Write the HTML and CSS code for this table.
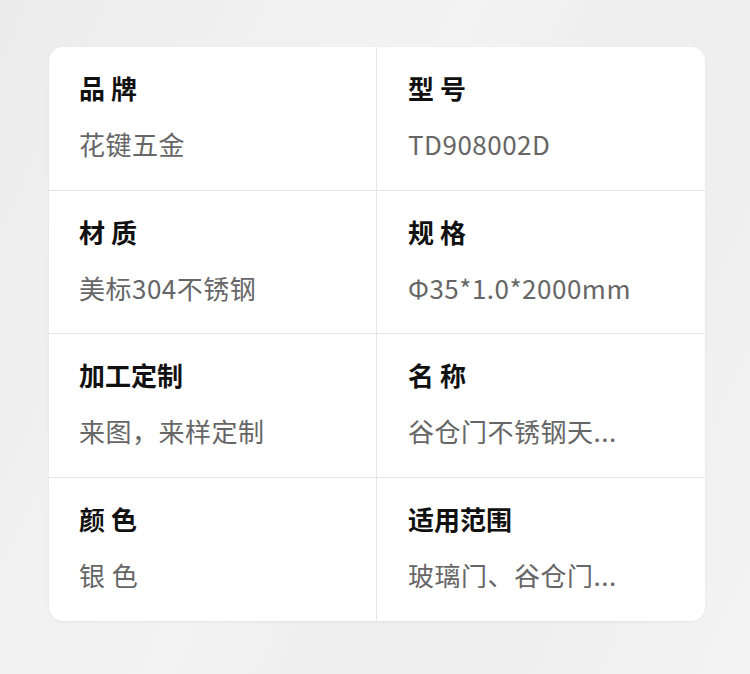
FILE: index.html
```html
<!DOCTYPE html>
<html lang="zh">
<head>
<meta charset="utf-8">
<link rel="stylesheet" href="styles.css">
</head>
<body>
<div class="page">
  <div class="card">
    <div class="cell"><div class="label">品 牌</div><div class="value">花键五金</div></div>
    <div class="cell"><div class="label">型 号</div><div class="value">TD908002D</div></div>
    <div class="cell"><div class="label">材 质</div><div class="value">美标304不锈钢</div></div>
    <div class="cell"><div class="label">规 格</div><div class="value">Φ35*1.0*2000mm</div></div>
    <div class="cell"><div class="label">加工定制</div><div class="value">来图，来样定制</div></div>
    <div class="cell"><div class="label">名 称</div><div class="value">谷仓门不锈钢天...</div></div>
    <div class="cell"><div class="label">颜 色</div><div class="value">银 色</div></div>
    <div class="cell"><div class="label">适用范围</div><div class="value">玻璃门、谷仓门...</div></div>
  </div>
</div>
</body>
</html>
```
FILE: styles.css
```css
html, body {
  margin: 0;
  padding: 0;
}
body {
  width: 750px;
  height: 674px;
  overflow: hidden;
  background: linear-gradient(115deg, #ececec 0%, #f1f1f1 30%, #f3f3f3 45%, #eeeeee 60%, #f0f0f0 85%, #f4f4f4 100%);
  font-family: "Noto Sans CJK SC", "Noto Sans", sans-serif;
}
.page {
  padding: 47px 45px 0 49px;
}
.card {
  width: 656px;
  height: 574px;
  background: #fff;
  border-radius: 14px;
  box-shadow: 0 1px 3px rgba(0, 0, 0, 0.06);
  display: grid;
  grid-template-columns: 327px 329px;
  grid-template-rows: repeat(4, 1fr);
  overflow: hidden;
}
.cell {
  padding: 24px 0 0 30px;
  border-bottom: 1px solid #e6e6e6;
  display: flex;
  flex-direction: column;
  gap: 22px;
}
.cell:nth-child(even) {
  border-left: 1px solid #e6e6e6;
  padding-left: 31px;
}
.cell:nth-child(n+7) {
  border-bottom: none;
}
.label {
  font-size: 26px;
  font-weight: 700;
  color: #111;
  line-height: 34px;
}
.value {
  font-size: 26px;
  color: #666;
  line-height: 34px;
  letter-spacing: 0.5px;
}
```
